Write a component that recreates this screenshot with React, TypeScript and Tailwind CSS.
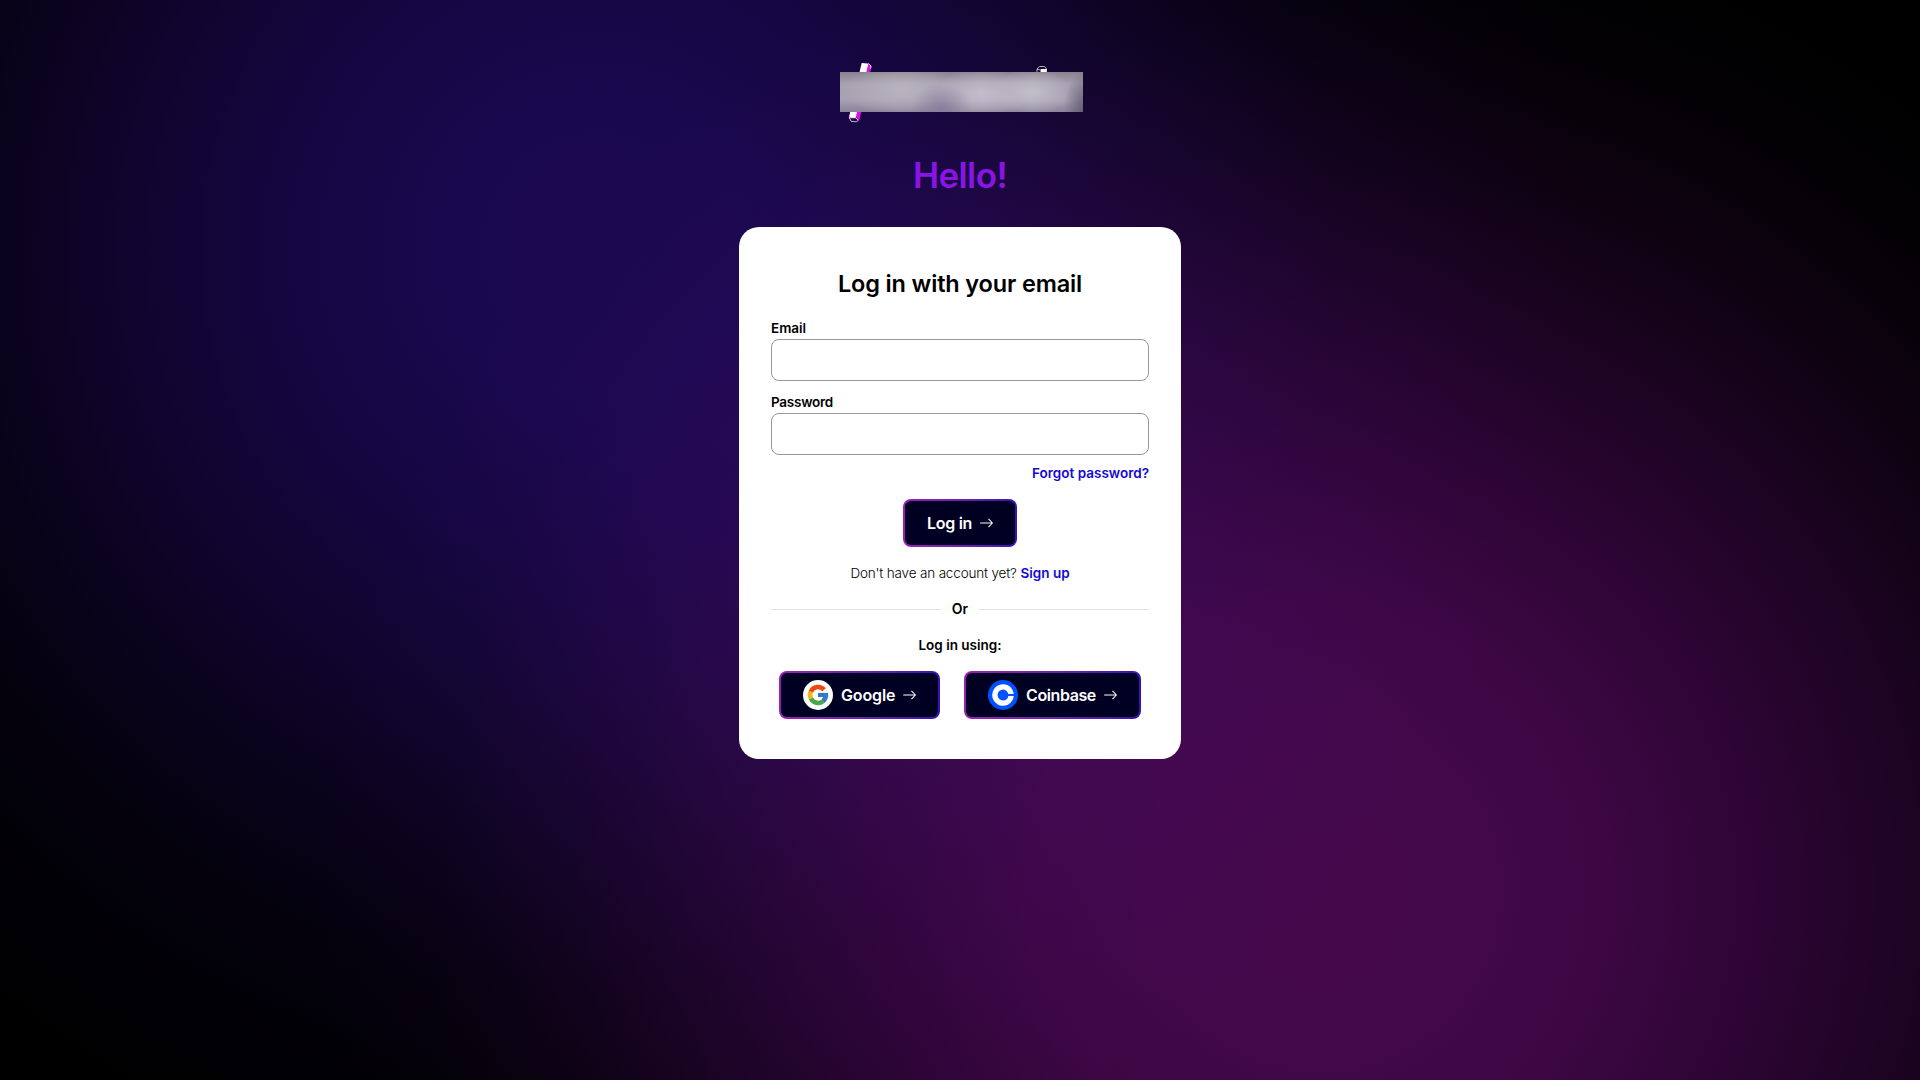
import type { ReactNode } from "react";

function Arrow() {
  return (
    <svg className="shrink-0" width="13" height="10" viewBox="0 0 13 10" fill="none" stroke="#fff" strokeWidth="1.05" strokeLinecap="round" strokeLinejoin="round">
      <path d="M.6 5H12.4M8.7 1.2 12.4 5 8.7 8.8" />
    </svg>
  );
}

function GoogleIcon() {
  return (
    <svg className="mr-2 shrink-0" width="30" height="30" viewBox="0 0 30 30" fill="none" strokeWidth="4.6">
      <circle cx="15" cy="15" r="15" fill="#fff" />
      <path stroke="#f9b50b" d="M7.9 11.6A7.9 7.9 0 0 0 7.9 18.6" />
      <path stroke="#ee4a0c" d="M21.1 9.8A7.9 7.9 0 0 0 7.9 11.6" />
      <path stroke="#4aa648" d="M7.9 18.6A7.9 7.9 0 0 0 20 21.2" />
      <path stroke="#3578c8" d="M20 21.2A7.9 7.9 0 0 0 22.8 15" />
      <path fill="#3578c8" d="M15 12.9H25.1V17H15Z" />
    </svg>
  );
}

function CoinbaseIcon() {
  return (
    <svg className="mr-2 shrink-0" width="30" height="30" viewBox="0 0 30 30">
      <circle cx="15" cy="15" r="15" fill="#0052ff" />
      <path fill="#fff" d="M15 20.4a5.4 5.4 0 1 1 5.32-6.3h5.44a10.8 10.8 0 1 0 0 1.8h-5.44A5.4 5.4 0 0 1 15 20.4Z" />
    </svg>
  );
}

function Logo() {
  return (
    <div className="relative h-[60px] w-[243px]">
      <svg className="absolute inset-0" width="243" height="60" viewBox="0 0 243 60">
        <path d="M22 0 29 .5 31.5 3.5 19.5 56.5 17.5 58.5 10.5 58 9 54Z" fill="#d912e8" />
        <path d="M21.7 0 28.3 .8 15.5 55.5 9 54.5Z" fill="#fff" />
        <path d="M28.3 .5 31 3 30.5 5.5" fill="none" stroke="#fff" strokeWidth=".8" />
        <path d="M9.2 54.8H15.8L18.2 57.2 16.8 58.8 11.4 58.4Z" fill="#1d0a48" stroke="#fff" strokeWidth=".7" />
        <path d="M197 9V6L199.5 3.5H204.5L206.5 6V9M197 6 200 7" fill="none" stroke="#ddd" strokeWidth=".8" />
        <path d="M200.5 9V6H206.5V9Z" fill="#fff" />
      </svg>
      <div className="absolute top-[9px] left-0 h-10 w-[243px] bg-[#aba4b6] bg-[radial-gradient(ellipse_30px_24px_at_101px_36px,#857d9ccc,transparent),radial-gradient(ellipse_24px_40px_at_248px_36px,#5e556e,transparent),radial-gradient(ellipse_48px_26px_at_142px_22px,#c4bdcb,transparent),radial-gradient(ellipse_40px_24px_at_192px_20px,#c2bfca,transparent),radial-gradient(ellipse_60px_26px_at_62px_18px,#b8b4bf,transparent),linear-gradient(180deg,#88828f,#a7a1b1_30%,#a8a1b4_70%,#8a8399)]" />
    </div>
  );
}

function Button({ className, children }: { className: string; children: ReactNode }) {
  return (
    <button className={"h-12 rounded-lg bg-linear-to-r from-[#9f1db5] to-[#3a10b4] p-[2px] " + className}>
      <span className="flex h-full w-full items-center rounded-[6px] bg-[#000022] pl-[22px] text-base font-semibold text-white">{children}</span>
    </button>
  );
}

function Divider() {
  return <div className="h-px flex-1 bg-[#e3e3e6]" />;
}

const label = "h-[22px] text-[13.5px] leading-[22px] font-semibold";
const field = "h-[42px] rounded-lg border border-[#999] outline-none";

export default function App() {
  return (
    <div className="flex h-[1080px] w-full flex-col items-center overflow-hidden bg-black bg-[radial-gradient(circle_1000px_at_1320px_890px,#44084b_0%,#43084a_15%,#3c0743_29%,#2e0535_43%,#1e0424_58%,#0e0211_74%,#030104_88%,#000_100%),radial-gradient(circle_980px_at_600px_250px,#1b0850_0%,#1a084e_15%,#160643_30%,#110532_45%,#0a031e_60%,#04010d_75%,#010004_90%,#000_100%)] pt-[63px] font-['Inter',sans-serif] text-black bg-blend-screen">
      <div className="ml-[2px]"><Logo /></div>
      <h1 className="mt-[30px] text-[35px] leading-[44px] font-semibold tracking-[-0.6px] text-[#8914e6]">Hello!</h1>
      <main className="mt-[30px] flex h-[532px] w-[442px] flex-col rounded-[20px] bg-white px-8 pt-[41px]">
        <h2 className="text-center text-[23.5px] leading-8 font-semibold tracking-[-0.15px]">Log in with your email</h2>
        <form className="flex flex-col">
          <label className={"mt-[17px] " + label}>Email</label>
          <input className={field} />
          <label className={"mt-[10px] tracking-[-0.25px] " + label}>Password</label>
          <input type="password" className={field} />
          <a className="mt-2 self-end text-[13.5px] leading-5 font-semibold text-[#1408d8]">Forgot password?</a>
          <Button className="mt-4 w-[114px] self-center"><span className="mr-2 tracking-[-0.3px]">Log in</span><Arrow /></Button>
        </form>
        <p className="mt-4 text-center text-[13.5px] leading-5"><span className="font-light tracking-[-0.17px]">Don't have an account yet?</span> <a className="font-semibold text-[#1408d8]">Sign up</a></p>
        <div className="mt-4 flex items-center gap-[11px] text-sm leading-5 font-semibold"><Divider />Or<Divider /></div>
        <p className="mt-4 text-center text-[13.5px] leading-5 font-semibold">Log in using:</p>
        <div className="mt-4 flex justify-center gap-6">
          <Button className="w-[161px]"><GoogleIcon /><span className="mr-2 tracking-[-0.15px]">Google</span><Arrow /></Button>
          <Button className="w-[177px]"><CoinbaseIcon /><span className="mr-2 tracking-[-0.4px]">Coinbase</span><Arrow /></Button>
        </div>
      </main>
    </div>
  );
}
